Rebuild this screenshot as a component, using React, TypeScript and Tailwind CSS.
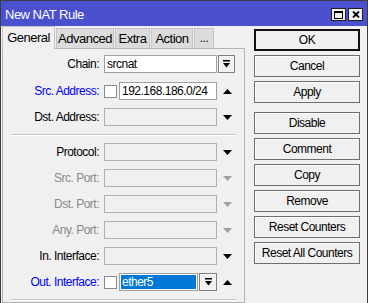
import React from "react";

const Up = ({ gray }: { gray?: boolean }) => (
  <svg width="9" height="5" viewBox="0 0 9 5" className="block">
    <polygon points="4.5,0 9,5 0,5" fill={gray ? "#a0a0a0" : "#000"} />
  </svg>
);
const Down = ({ gray }: { gray?: boolean }) => (
  <svg width="9" height="5" viewBox="0 0 9 5" className="block">
    <polygon points="0,0 9,0 4.5,5" fill={gray ? "#a0a0a0" : "#000"} />
  </svg>
);
const DropIcon = () => (
  <svg width="7" height="8" viewBox="0 0 7 8" className="block">
    <rect x="0" y="0" width="7" height="1.5" fill="#000" />
    <polygon points="0,3 7,3 3.5,7.5" fill="#000" />
  </svg>
);

const DropBtn = ({ w = "w-[17px]" }: { w?: string }) => (
  <div className={`h-[18px] ${w} border border-[#808080] bg-[#f0f0f0] shadow-[inset_1px_1px_0_#fff] flex items-center justify-center`}>
    <DropIcon />
  </div>
);

const Check = () => <div className="w-[13px] h-[13px] bg-white border border-[#8a8a8a] shrink-0" />;

type RowProps = {
  label: string;
  color?: string;
  children: React.ReactNode;
  className?: string;
};
const Row = ({ label, color = "text-black", children, className = "" }: RowProps) => (
  <div className={`flex items-center h-[18px] ${className}`}>
    <div className={`w-[96px] text-right leading-[18px] whitespace-nowrap ${color}`}>{label}</div>
    <div className="ml-[5px] flex items-center h-[18px]">{children}</div>
  </div>
);

const Input = ({ w, value, disabled }: { w: string; value?: string; disabled?: boolean }) => (
  <div
    className={`${w} h-[18px] border ${disabled ? "border-[#b0b0b0] bg-[#f0f0f0]" : "border-[#a0a0a0] bg-white"} leading-[16px] pl-[2px] text-black whitespace-nowrap overflow-hidden`}
  >
    {value}
  </div>
);

const Sep = ({ className = "" }: { className?: string }) => (
  <div className={`mx-[8px] border-t border-[#c4c4c4] border-b border-b-white ${className}`} />
);

const Btn = ({ children, def, className = "" }: { children: React.ReactNode; def?: boolean; className?: string }) => (
  <div
    className={`w-[106px] h-[22px] flex items-center justify-center whitespace-nowrap bg-[#f0f0f0] text-black ${
      def ? "border-2 border-[#111]" : "border border-[#6e6e6e] shadow-[inset_1px_1px_0_#fff]"
    } ${className}`}
  >
    {children}
  </div>
);

export default function App() {
  return (
    <div className="w-[368px] h-[303px] overflow-hidden bg-[#f0f0f0] border-l border-t border-r border-[#3c3c3c] font-['Liberation_Sans',Arial,sans-serif] text-[12px] tracking-[-0.5px] flex flex-col">
      {/* title bar */}
      <div className="h-[25px] shrink-0 bg-[#4b50cf] flex items-start pt-[7px] pl-[4px] pr-[4px]">
        <div className="text-white leading-[16px] mt-[-1px] text-[13px]">New NAT Rule</div>
        <div className="ml-auto flex gap-[2px]">
          <div className="w-[15px] h-[13px] bg-[#f0f0f0] border border-[#202020] flex items-center justify-center">
            <div className="w-[9px] h-[8px] border border-[#000] border-t-2" />
          </div>
          <div className="w-[15px] h-[13px] bg-[#f0f0f0] border border-[#202020] flex items-center justify-center">
            <svg width="8" height="7" viewBox="0 0 8 7" className="block">
              <path d="M1 0.5 L7 6.5 M7 0.5 L1 6.5" stroke="#000" strokeWidth="1.8" />
            </svg>
          </div>
        </div>
      </div>

      <div className="flex flex-1">
        {/* left column */}
        <div className="w-[244px] pl-[1px] flex flex-col">
          <div className="h-[22px] flex items-end">
            <div className="relative z-10 w-[53px] h-[23px] mb-[-1px] bg-[#f0f0f0] border-l border-t border-r border-[#c4c4c4] flex justify-center pt-[2px] leading-[18px] text-black text-[13px]">
              General
            </div>
            <div className="ml-[1px] w-[58px] h-[20px] bg-[#dcdcdc] border-l border-t border-r border-[#c4c4c4] flex justify-center leading-[19px] text-[13px]">
              Advanced
            </div>
            <div className="ml-[1px] w-[35px] h-[20px] bg-[#dcdcdc] border-l border-t border-r border-[#c4c4c4] flex justify-center leading-[19px] text-[13px]">
              Extra
            </div>
            <div className="ml-[1px] w-[42px] h-[20px] bg-[#dcdcdc] border-l border-t border-r border-[#c4c4c4] flex justify-center leading-[19px] text-[13px]">
              Action
            </div>
            <div className="ml-[1px] w-[20px] h-[20px] bg-[#dcdcdc] border-l border-t border-r border-[#c4c4c4] flex justify-center leading-[19px]">
              ...
            </div>
          </div>
          <div className="flex-1 border border-[#b4b4b4] pt-[6px]">
            <Row label="Chain:">
              <Input w="w-[113px]" value="srcnat" />
              <div className="ml-[1px]">
                <DropBtn />
              </div>
            </Row>
            <Row label="Src. Address:" color="text-[#0000ff]" className="mt-[9px]">
              <Check />
              <div className="ml-[2px]">
                <Input w="w-[98px]" value="192.168.186.0/24" />
              </div>
              <div className="ml-[6px]">
                <Up />
              </div>
            </Row>
            <Row label="Dst. Address:" className="mt-[8px]">
              <Input w="w-[113px]" disabled />
              <div className="ml-[6px]">
                <Down />
              </div>
            </Row>
            <Sep className="mt-[8px]" />
            <Row label="Protocol:" className="mt-[7px]">
              <Input w="w-[113px]" disabled />
              <div className="ml-[6px]">
                <Down />
              </div>
            </Row>
            <Row label="Src. Port:" color="text-[#8a8a8a]" className="mt-[8px]">
              <Input w="w-[113px]" disabled />
              <div className="ml-[6px]">
                <Down gray />
              </div>
            </Row>
            <Row label="Dst. Port:" color="text-[#8a8a8a]" className="mt-[8px]">
              <Input w="w-[113px]" disabled />
              <div className="ml-[6px]">
                <Down gray />
              </div>
            </Row>
            <Row label="Any. Port:" color="text-[#8a8a8a]" className="mt-[8px]">
              <Input w="w-[113px]" disabled />
              <div className="ml-[6px]">
                <Down gray />
              </div>
            </Row>
            <Row label="In. Interface:" className="mt-[8px]">
              <Input w="w-[113px]" disabled />
              <div className="ml-[6px]">
                <Down />
              </div>
            </Row>
            <Row label="Out. Interface:" color="text-[#0000ff]" className="mt-[8px]">
              <Check />
              <div className="ml-[2px] w-[79px] h-[18px] border border-[#a0a0a0] bg-white p-[1px]">
                <div className="h-full bg-[#0078d7] text-white leading-[14px] pl-[1px]">ether5</div>
              </div>
              <div className="ml-[1px]">
                <DropBtn w="w-[18px]" />
              </div>
              <div className="ml-[6px]">
                <Up />
              </div>
            </Row>
            <Sep className="mt-[8px]" />
          </div>
        </div>

        {/* right column */}
        <div className="pl-[9px] pt-[3px] flex flex-col gap-[4px]">
          <Btn def>OK</Btn>
          <Btn>Cancel</Btn>
          <Btn>Apply</Btn>
          <Btn className="mt-[5px]">Disable</Btn>
          <Btn>Comment</Btn>
          <Btn>Copy</Btn>
          <Btn>Remove</Btn>
          <Btn>Reset Counters</Btn>
          <Btn>Reset All Counters</Btn>
        </div>
      </div>
    </div>
  );
}
